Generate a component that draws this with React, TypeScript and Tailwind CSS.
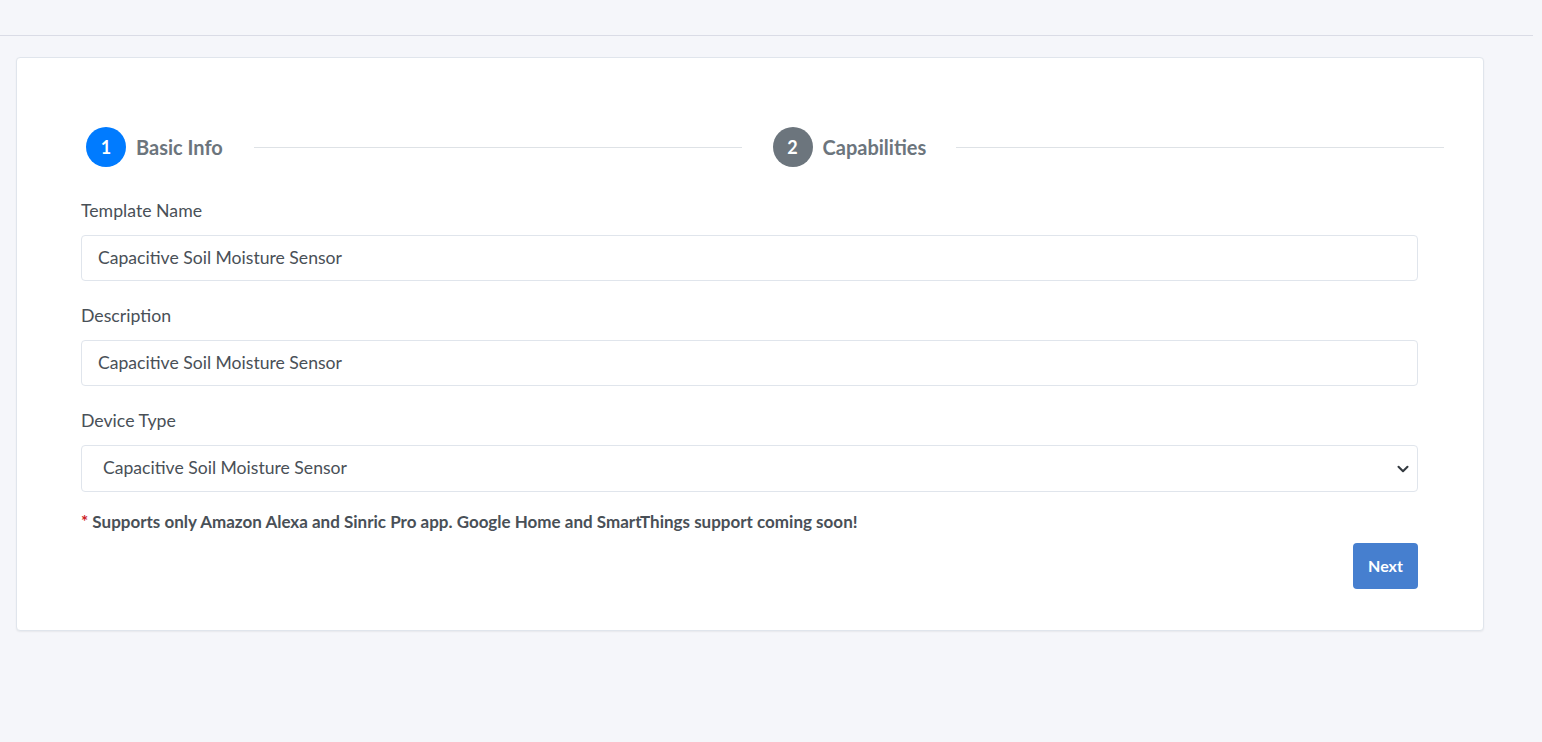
import { ChevronDown } from 'lucide-react';

const font = { fontFamily: 'Lato, "Noto Sans", sans-serif' };

const StepCircle: React.FC<{ n: number; active?: boolean }> = ({ n, active }) => (
  <div
    className={`flex h-10 w-10 flex-none items-center justify-center rounded-full text-[18px] font-bold text-white ${
      active ? 'bg-[#007bff]' : 'bg-[#6c757d]'
    }`}
  >
    {n}
  </div>
);

const Field: React.FC<{ label: string; value: string }> = ({ label, value }) => (
  <div className="mb-[22px]">
    <label className="mb-[12px] block text-[17.7px] leading-[25px] text-[#495057]">{label}</label>
    <div className="flex h-[46px] items-center rounded border border-[#e0e5ec] bg-white px-4 text-[17.6px] text-[#495057]">
      {value}
    </div>
  </div>
);

export default function App() {
  return (
    <div className="min-h-[742px] w-full bg-[#f5f6fa]" style={font}>
      <div className="h-9 w-[1533px] border-b border-[#dadce6]" />
      <div className="pt-[21px] pl-4">
        <div className="w-[1468px] rounded border border-[#e0e5ec] bg-white pt-[69px] pr-[65px] pb-[41px] pl-[64px] shadow-[0_1px_2px_rgba(0,0,0,0.06)]">
          <div className="mr-[-26px] ml-[5px] flex items-center">
            <StepCircle n={1} active />
            <span className="ml-[10px] text-[20px] font-bold text-[#6c757d]">Basic Info</span>
            <div className="mx-[31px] h-px flex-1 bg-[#dee2e6]" />
            <StepCircle n={2} />
            <span className="ml-[10px] text-[20px] font-bold text-[#6c757d]">Capabilities</span>
            <div className="ml-[30px] h-px flex-1 bg-[#dee2e6]" />
          </div>

          <div className="mt-[31px]">
            <Field label="Template Name" value="Capacitive Soil Moisture Sensor" />
            <Field label="Description" value="Capacitive Soil Moisture Sensor" />
            <div>
              <label className="mb-[12px] block text-[17.7px] leading-[25px] text-[#495057]">Device Type</label>
              <div className="flex h-[47px] items-center justify-between rounded border border-[#e0e5ec] bg-white pr-[5px] pl-[21px] text-[17.6px] text-[#495057]">
                <span>Capacitive Soil Moisture Sensor</span>
                <ChevronDown className="h-[18px] w-[18px] text-[#343a40]" strokeWidth={2.75} />
              </div>
            </div>
            <p className="mt-[18px] text-[17px] leading-6 font-bold text-[#495057]">
              <span className="text-[#cd201f]">*</span> Supports only Amazon Alexa and Sinric Pro app. Google Home and
              SmartThings support coming soon!
            </p>
            <div className="mt-[9px] flex justify-end">
              <button className="h-[46px] w-[65px] rounded bg-[#467fcf] text-[16px] font-bold text-white">Next</button>
            </div>
          </div>
        </div>
      </div>
    </div>
  );
}
